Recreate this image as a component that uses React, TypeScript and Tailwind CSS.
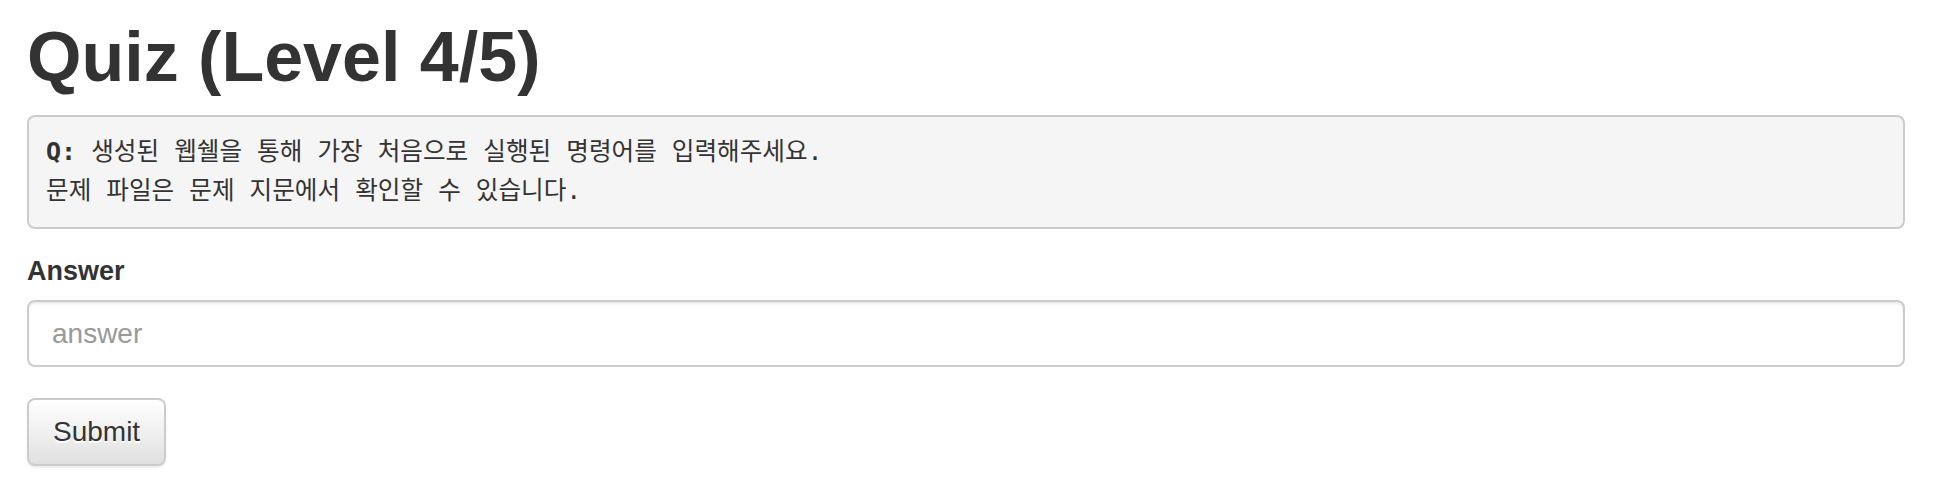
import React from "react";

const HANGUL = /([\uAC00-\uD7A3]+)/;

function Mixed({ text }: { text: string }) {
  const parts = text.split(HANGUL);
  return (
    <>
      {parts.map((p, i) =>
        /[\uAC00-\uD7A3]/.test(p) ? (
          <span
            key={i}
            className="font-['Noto_Sans_CJK_KR',sans-serif] text-[24.6px] leading-[30px]"
          >
            {p}
          </span>
        ) : (
          <span key={i}>{p}</span>
        )
      )}
    </>
  );
}

export default function App() {
  return (
    <div className="min-h-screen bg-white pl-[27px] pr-[29px] font-['Liberation_Sans',Arial,sans-serif] text-[#333]">
      <h1 className="mt-[19px] mb-[19px] text-[70px] leading-[77px] font-bold text-[#333]">
        Quiz (Level 4/5)
      </h1>
      <div className="mb-[23px] rounded-[8px] border-2 border-[#cccccc] bg-[#f5f5f5] pl-[17px] pr-[18px] pt-[15px] pb-[17px] font-['DejaVu_Sans_Mono',monospace] text-[25px] leading-[39px] text-[#333] whitespace-pre">
        <div>
          <span className="font-bold">Q:</span>
          <Mixed text=" 생성된 웹쉘을 통해 가장 처음으로 실행된 명령어를 입력해주세요." />
        </div>
        <div>
          <Mixed text="문제 파일은 문제 지문에서 확인할 수 있습니다." />
        </div>
      </div>
      <label className="mb-[9px] block text-[27px] leading-[39px] font-bold text-[#333]">
        Answer
      </label>
      <input
        type="text"
        placeholder="answer"
        className="mb-[31px] block h-[67px] w-full rounded-[8px] border-2 border-[#cccccc] bg-white px-[23px] text-[28px] text-[#555] placeholder:text-[#999] shadow-[inset_0_2px_2px_rgba(0,0,0,0.075)] outline-none font-['Liberation_Sans',Arial,sans-serif]"
      />
      <button
        type="button"
        className="block h-[68px] rounded-[8px] border-2 border-[#cccccc] bg-gradient-to-b from-[#ffffff] to-[#e0e0e0] px-[24px] text-[28px] text-[#333] [text-shadow:0_2px_0_#fff] shadow-[inset_0_2px_0_rgba(255,255,255,0.15),0_2px_2px_rgba(0,0,0,0.075)] font-['Liberation_Sans',Arial,sans-serif]"
      >
        Submit
      </button>
    </div>
  );
}
